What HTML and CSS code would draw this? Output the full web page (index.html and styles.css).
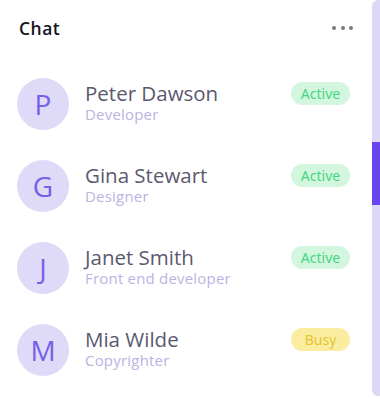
FILE: index.html
```html
<!DOCTYPE html>
<html>
<head>
<meta charset="utf-8">
<link rel="stylesheet" href="styles.css">
</head>
<body>
<div class="frame">
  <div class="card">
    <div class="header">
      <div class="title">Chat</div>
      <div class="dots"><span></span><span></span><span></span></div>
    </div>
    <div class="list">
      <div class="row">
        <div class="avatar">P</div>
        <div class="info"><div class="name">Peter Dawson</div><div class="role">Developer</div></div>
        <div class="badge active">Active</div>
      </div>
      <div class="row">
        <div class="avatar">G</div>
        <div class="info"><div class="name">Gina Stewart</div><div class="role">Designer</div></div>
        <div class="badge active">Active</div>
      </div>
      <div class="row">
        <div class="avatar">J</div>
        <div class="info"><div class="name">Janet Smith</div><div class="role">Front end developer</div></div>
        <div class="badge active">Active</div>
      </div>
      <div class="row">
        <div class="avatar">M</div>
        <div class="info"><div class="name">Mia Wilde</div><div class="role">Copyrighter</div></div>
        <div class="badge busy">Busy</div>
      </div>
    </div>
  </div>
  <div class="track"><div class="thumb"></div></div>
</div>
</body>
</html>
```
FILE: styles.css
```css
html, body {
  margin: 0;
  padding: 0;
  background: #ffffff;
}
body {
  font-family: "Open Sans", "Noto Sans", sans-serif;
  width: 380px;
  height: 399px;
  overflow: hidden;
}
.frame {
  display: flex;
  height: 399px;
}
.card {
  flex: 1;
  display: flex;
  flex-direction: column;
}
.header {
  height: 56px;
  display: flex;
  align-items: center;
  justify-content: space-between;
  padding: 0 19px 0 19px;
}
.title {
  font-size: 17.5px;
  font-weight: 600;
  color: #16161f;
  letter-spacing: 0.5px;
}
.dots {
  display: flex;
  gap: 4.5px;
}
.dots span {
  width: 4px;
  height: 4px;
  border-radius: 50%;
  background: #7a7a80;
}
.list {
  padding: 7px 22px 0 17px;
  display: flex;
  flex-direction: column;
}
.row {
  height: 82px;
  display: flex;
  align-items: center;
}
.avatar {
  width: 52px;
  height: 52px;
  border-radius: 50%;
  background: #dedaf7;
  color: #7760e8;
  font-size: 28px;
  display: flex;
  align-items: center;
  justify-content: center;
  flex-shrink: 0;
}
.info {
  flex: 1;
  margin-left: 16px;
  margin-bottom: 4px;
  display: flex;
  flex-direction: column;
}
.name {
  font-size: 20.5px;
  line-height: 23px;
  color: #5b5870;
}
.role {
  font-size: 15px;
  line-height: 18px;
  color: #bbb3e2;
  letter-spacing: 0.2px;
}
.badge {
  align-self: flex-start;
  margin-top: 19px;
  width: 59px;
  height: 23px;
  border-radius: 12px;
  font-size: 14px;
  display: flex;
  align-items: center;
  justify-content: center;
  font-family: "Noto Sans", sans-serif;
}
.badge.active {
  background: #d3f6df;
  color: #45d67f;
}
.badge.busy {
  background: #faeda0;
  color: #e6c533;
}
.track {
  width: 8px;
  height: 396px;
  background: #dcd8f6;
  border-radius: 6px 0 0 6px;
  display: flex;
  flex-direction: column;
  padding-top: 142px;
  box-sizing: border-box;
}
.thumb {
  height: 63px;
  background: #6a45ee;
}
```
